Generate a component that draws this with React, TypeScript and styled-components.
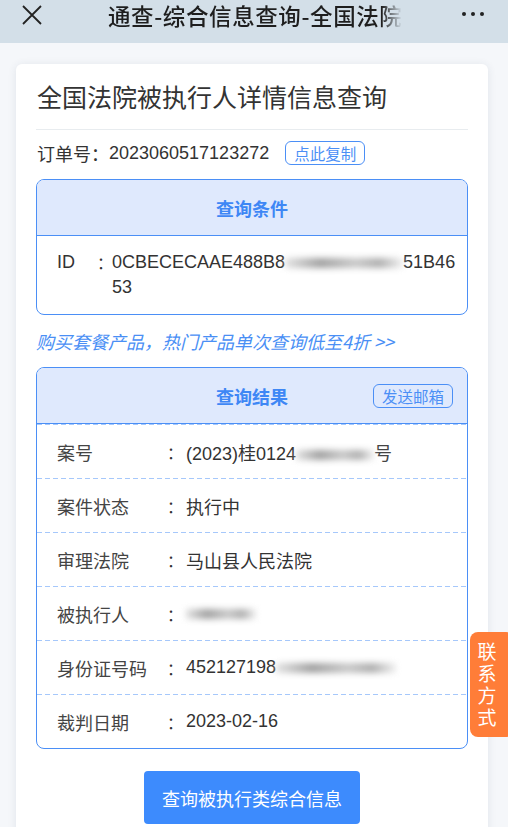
import React from 'react'
import styled, { createGlobalStyle } from 'styled-components'

const GlobalStyle = createGlobalStyle`
    html, body {
        margin: 0;
        padding: 0;
        background: #f5f7fa;
        font-family: "Liberation Sans", "Noto Sans CJK SC", sans-serif;
        color: #333;
        overflow: hidden;
    }
`

const blue = '#4b8ff6'

const resultRows = [
    { label: '案号', value: '(2023)桂0124', blur: '号' },
    { label: '案件状态', value: '执行中' },
    { label: '审理法院', value: '马山县人民法院' },
    { label: '被执行人', value: '', masked: true },
    { label: '身份证号码', value: '452127198', masked: true },
    { label: '裁判日期', value: '2023-02-16' },
]

const Page = styled.div`
    width: 508px;
    height: 827px;
    overflow: hidden;
    position: relative;
`

const TopBar = styled.div`
    height: 43px;
    background: #d3dfe8;
    display: flex;
    align-items: center;
    padding: 0 24px 0 22px;
`

const TopTitle = styled.div`
    margin-left: 66px;
    white-space: nowrap;
    font-size: 22.5px;
    font-weight: 500;
    color: #1e1e1e;
    font-family: "Noto Sans CJK SC", sans-serif;
    letter-spacing: 0.6px;
    margin-bottom: 14px;
    -webkit-mask-image: linear-gradient(to right, #000 93%, transparent 100%);
    mask-image: linear-gradient(to right, #000 93%, transparent 100%);
`

const MoreDots = styled.div`
    margin-left: auto;
    display: flex;
    gap: 5px;
    margin-bottom: 15px;
    span {
        width: 4px;
        height: 4px;
        border-radius: 50%;
        background: #222;
    }
`

const Card = styled.div`
    margin: 21px 20px 0 16px;
    background: #fff;
    border-radius: 6px;
    box-shadow: 0 1px 8px rgba(40, 60, 90, 0.1);
    padding: 14px 20px 40px;
`

const CardTitle = styled.div`
    font-size: 25px;
    line-height: 36px;
    color: #333;
    padding-left: 1px;
    padding-bottom: 15px;
    border-bottom: 1px solid #e8ecef;
    font-family: "Noto Sans CJK SC", sans-serif;
`

const OrderLine = styled.div`
    margin-top: 8px;
    display: flex;
    align-items: center;
    height: 30px;
    font-size: 18px;
    padding-left: 1px;
    span.lbl {
        font-family: "Noto Sans CJK SC", sans-serif;
    }
`

const SmallButton = styled.span<{ $ml?: number }>`
    display: inline-flex;
    align-items: center;
    justify-content: center;
    border: 1px solid ${blue};
    border-radius: 6px;
    color: ${blue};
    font-size: 15.5px;
    font-family: "Noto Sans CJK SC", sans-serif;
    height: 22px;
    padding: 0 8px;
    margin-left: ${(p) => p.$ml ?? 0}px;
`

const Box = styled.div<{ $mt: number }>`
    margin-top: ${(p) => p.$mt}px;
    border: 1px solid ${blue};
    border-radius: 8px;
    overflow: hidden;
    background: #fff;
`

const BoxHead = styled.div`
    height: 55px;
    background: #dfe9fd;
    border-bottom: 1px solid ${blue};
    display: flex;
    align-items: center;
    justify-content: center;
    position: relative;
    color: #3e87f5;
    font-size: 18px;
    font-weight: 700;
    font-family: "Noto Sans CJK SC", sans-serif;
`

const HeadAction = styled.div`
    position: absolute;
    right: 14px;
    top: 14px;
    font-weight: 400;
`

const IdRow = styled.div`
    display: grid;
    grid-template-columns: 40px 15px 1fr;
    padding: 14px 10px 14px 20px;
    font-size: 18px;
    line-height: 25px;
`

const NoWrap = styled.span`
    white-space: nowrap;
`

const Colon = styled.span`
    font-family: "Noto Sans CJK SC", sans-serif;
    font-size: 16px;
`

const Blur = styled.span<{ $w: number }>`
    display: inline-block;
    width: ${(p) => p.$w}px;
    height: 10px;
    vertical-align: middle;
    background: linear-gradient(to right, #ddd, #888 30%, #bbb 60%, #999 80%, #eee);
    filter: blur(3px);
    opacity: 0.8;
`

const Promo = styled.div`
    margin-top: 13px;
    font-size: 18px;
    line-height: 26px;
    color: #4a8ff5;
    font-style: italic;
    font-family: "Noto Sans CJK SC", sans-serif;
    white-space: nowrap;
`

const Row = styled.div`
    display: grid;
    grid-template-columns: 110px 19px 1fr;
    align-items: center;
    height: 53px;
    padding-left: 20px;
    font-size: 18px;
    background-image: linear-gradient(to right, #a6c8fb 60%, transparent 60%);
    background-size: 8px 1px;
    background-repeat: repeat-x;
    background-position: 0 0;
    padding-top: 1px;
    &:first-of-type {
        background: none;
    }
`

const Label = styled.span`
    font-family: "Noto Sans CJK SC", sans-serif;
    color: #444;
`

const ButtonWrap = styled.div`
    display: flex;
    justify-content: center;
    margin-top: 22px;
`

const MainButton = styled.button`
    width: 216px;
    height: 53px;
    border: none;
    border-radius: 4px;
    background: #3d8bfd;
    color: #fff;
    font-size: 18px;
    font-family: "Noto Sans CJK SC", sans-serif;
`

const ContactTab = styled.div`
    position: absolute;
    right: -6px;
    top: 632px;
    width: 44px;
    height: 105px;
    border-radius: 8px;
    background: #ff7d38;
    color: #fff;
    font-size: 19px;
    line-height: 19px;
    letter-spacing: 3px;
    writing-mode: vertical-rl;
    font-family: "Noto Sans CJK SC", sans-serif;
    display: flex;
    align-items: center;
    justify-content: flex-start;
    padding: 10px 0 0 0;
    box-sizing: border-box;
    span {
        margin-right: 10px;
    }
`

const App = () => {
    return (
        <Page>
            <GlobalStyle />
            <TopBar>
                <svg width="20" height="20" viewBox="0 0 20 20" style={{ marginBottom: 14 }}>
                    <path d="M1 1 L19 19 M19 1 L1 19" stroke="#222" strokeWidth="1.8" fill="none" />
                </svg>
                <TopTitle>通查-综合信息查询-全国法院</TopTitle>
                <MoreDots>
                    <span />
                    <span />
                    <span />
                </MoreDots>
            </TopBar>
            <Card>
                <CardTitle>全国法院被执行人详情信息查询</CardTitle>
                <OrderLine>
                    <span className="lbl">订单号：</span>
                    <span>2023060517123272</span>
                    <SmallButton $ml={16}>点此复制</SmallButton>
                </OrderLine>

                <Box $mt={11}>
                    <BoxHead>查询条件</BoxHead>
                    <IdRow>
                        <span>ID</span>
                        <Colon>：</Colon>
                        <span>
                            <NoWrap>
                                0CBECECAAE488B8<Blur $w={118} />51B46
                            </NoWrap>
                            <br />
                            53
                        </span>
                    </IdRow>
                </Box>

                <Promo>购买套餐产品，热门产品单次查询低至4折 &gt;&gt;</Promo>

                <Box $mt={13}>
                    <BoxHead>
                        查询结果
                        <HeadAction>
                            <SmallButton>发送邮箱</SmallButton>
                        </HeadAction>
                    </BoxHead>
                    {resultRows.map((row, i) => (
                        <Row key={i}>
                            <Label>{row.label}</Label>
                            <Colon>：</Colon>
                            <span>
                                {row.value}
                                {row.blur && (
                                    <>
                                        <Blur $w={78} />
                                        <Label>{row.blur}</Label>
                                    </>
                                )}
                                {row.masked && <Blur $w={row.value ? 120 : 70} />}
                            </span>
                        </Row>
                    ))}
                </Box>

                <ButtonWrap>
                    <MainButton>查询被执行类综合信息</MainButton>
                </ButtonWrap>
            </Card>
            <ContactTab>
                <span>联系方式</span>
            </ContactTab>
        </Page>
    )
}

export default App
